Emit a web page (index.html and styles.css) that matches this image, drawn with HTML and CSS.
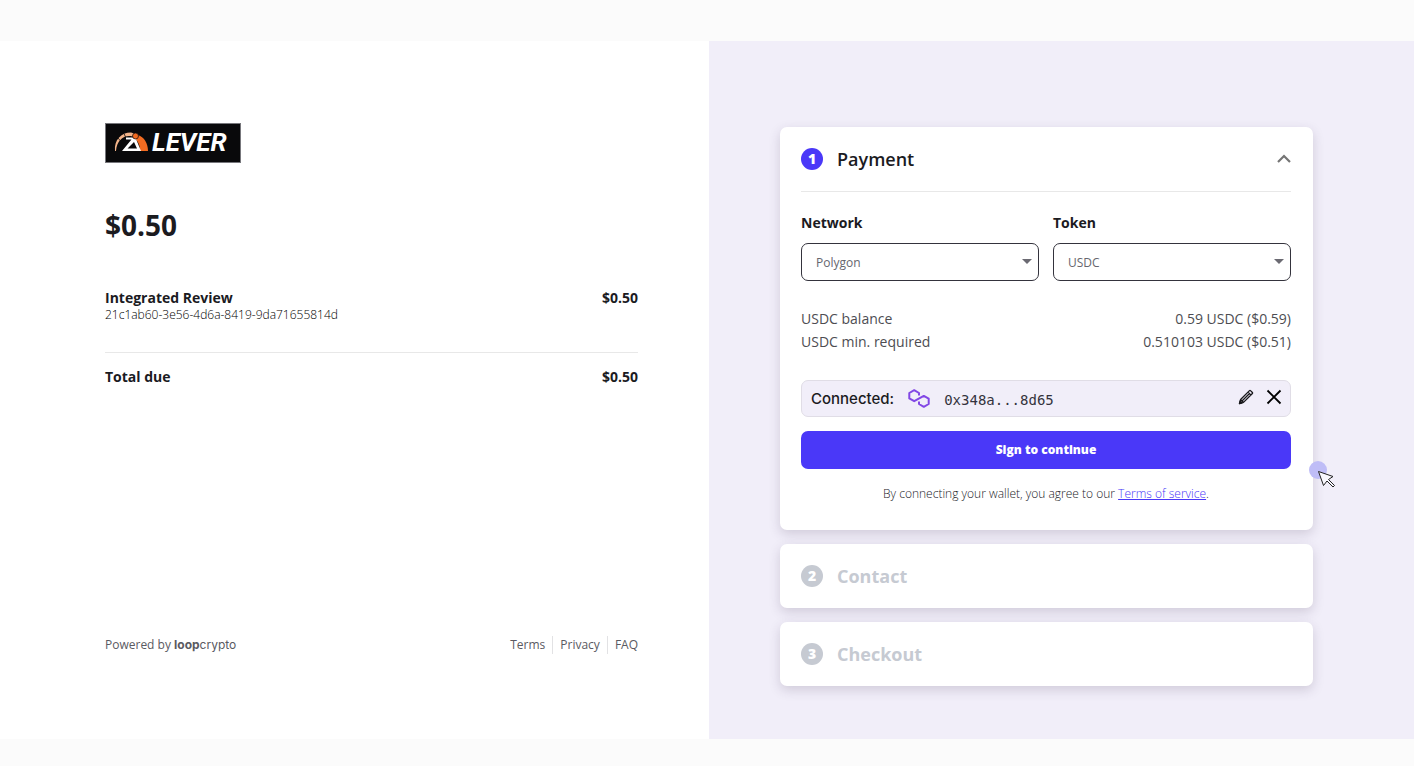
FILE: index.html
```html
<!DOCTYPE html>
<html lang="en">
<head>
<meta charset="utf-8">
<meta name="viewport" content="width=device-width, initial-scale=1">
<title>Payment</title>
<link rel="stylesheet" href="styles.css">
</head>
<body>
<main class="checkout">
  <section class="summary">
    <div class="summary-inner">
      <svg class="logo" viewBox="0 0 136 40" role="img" aria-label="Lever">
        <rect x="0.5" y="0.5" width="135" height="39" fill="#09090b" stroke="#77777c"/>
        <path d="M10 28C9 17 16 9.500 26 9.500L29 10.500L27.500 13.500C19 11.500 12 17 11 28Z" fill="#f3b48a"/>
        <path d="M13 15L15.500 18M19 10.500L20.500 14" stroke="#09090b" stroke-width="0.800"/>
        <path d="M33 12C39 14 43 20 43 28H35C35 22 33 18 29 15Z" fill="#f26b21"/>
        <path fill-rule="evenodd" d="M21 14.500H28L31 16L36 28H17L26.500 16.500H21ZM22.500 25.500H32L29 19Z" fill="#fff"/>
        <circle cx="30.500" cy="13" r="3" fill="#f26b21" stroke="#09090b" stroke-width="0.700"/>
        <text class="logo-text" x="47" y="28">LEVER</text>
      </svg>
      <h1 class="amount">$0.50</h1>
      <div class="line strong"><span>Integrated Review</span><span>$0.50</span></div>
      <p class="item-id">21c1ab60-3e56-4d6a-8419-9da71655814d</p>
      <div class="line strong total"><span>Total due</span><span>$0.50</span></div>
      <footer class="footer">
        <div>Powered by <span class="brand"><b>loop</b>crypto</span></div>
        <nav class="links"><a href="#">Terms</a><a href="#">Privacy</a><a href="#">FAQ</a></nav>
      </footer>
    </div>
  </section>
  <section class="steps">
    <div class="steps-inner">
      <article class="card active">
        <button class="step-head" type="button" aria-expanded="true">
          <span class="badge">1</span><span class="step-title">Payment</span>
          <svg class="chevron" viewBox="0 0 14 10"><path d="M1 8L7 2L13 8" fill="none" stroke="#757575" stroke-width="2.200"/></svg>
        </button>
        <div class="step-body">
          <div class="fields">
            <div class="field">
              <label for="network">Network</label>
              <div class="select-wrap"><select id="network"><option>Polygon</option></select></div>
            </div>
            <div class="field">
              <label for="token">Token</label>
              <div class="select-wrap"><select id="token"><option>USDC</option></select></div>
            </div>
          </div>
          <div class="balances">
            <div class="line"><span>USDC balance</span><span>0.59 USDC ($0.59)</span></div>
            <div class="line"><span>USDC min. required</span><span>0.510103 USDC ($0.51)</span></div>
          </div>
          <div class="wallet">
            <span class="wallet-label">Connected:</span>
            <svg class="polygon" viewBox="0 0 22 20" fill="none" stroke="#8247e5" stroke-width="2" stroke-linejoin="round">
              <path d="M11 6.500V4L6.200 1.200L1.300 4V9.400L6.200 12.200L15.800 6.900L20.700 9.700V15L15.800 17.800L11 15V12.500"/>
            </svg>
            <span class="address">0x348a...8d65</span>
            <span class="actions">
              <button class="icon-button" type="button" aria-label="Edit wallet">
                <svg class="icon" viewBox="0 0 16 16" fill="none" stroke="#18181b" stroke-width="1.300" stroke-linejoin="round"><path d="M1.500 14.500L2.600 10.500L11.500 1.600Q12 1.100 12.500 1.600L14.400 3.500Q14.900 4 14.400 4.500L5.500 13.400ZM2.600 10.500L5.500 13.400M10 3.100L12.900 6M4 12L11.500 4.500"/><path d="M1.500 14.500L2.200 12L4 13.800Z" fill="#18181b"/></svg>
              </button>
              <button class="icon-button" type="button" aria-label="Disconnect wallet">
                <svg class="icon" viewBox="0 0 16 16"><path d="M1.500 1.500L14.500 14.500M14.500 1.500L1.500 14.500" stroke="#000" stroke-width="1.800"/></svg>
              </button>
            </span>
          </div>
          <button class="submit" type="button">Sign to continue</button>
          <p class="terms">By connecting your wallet, you agree to our <a href="#">Terms of service</a>.</p>
        </div>
        <svg class="pointer" viewBox="0 0 28 28"><circle cx="9" cy="9" r="9" fill="#bfbdf7"/><path d="M9.500 10.500L24 15.500L19.500 18.500L25.500 24.500L24 26L18 20L14.500 24.500Z" fill="#f8f7fe" stroke="#222" stroke-width="1" stroke-linejoin="round"/></svg>
      </article>
      <article class="card"><button class="step-head" type="button" disabled><span class="badge">2</span><span class="step-title">Contact</span></button></article>
      <article class="card"><button class="step-head" type="button" disabled><span class="badge">3</span><span class="step-title">Checkout</span></button></article>
    </div>
  </section>
</main>
</body>
</html>
```

FILE: styles.css
```css
* { box-sizing: border-box; }
body {
  margin: 0;
  padding: 41px 0 27px;
  min-height: 100vh;
  display: flex;
  background: #fbfbfb;
  color: #1b1b1f;
  font: 14px/18px "Open Sans", sans-serif;
}
h1, p { margin: 0; }
button { font: inherit; border: 0; background: none; padding: 0; cursor: pointer; }
.checkout { flex: 1; display: grid; grid-template-columns: 709fr 705fr; }
.summary { background: #fff; padding: 82px 71px 85px 24px; display: flex; justify-content: flex-end; }
.summary-inner { flex: 1; max-width: 533px; display: flex; flex-direction: column; }
.logo { width: 136px; height: 40px; }
.logo-text { font: italic 700 26px Roboto, sans-serif; fill: #fff; }
.amount { margin: 42px 0 44px; font-size: 28px; line-height: 40px; font-weight: 700; }
.line { display: flex; justify-content: space-between; }
.strong { font-weight: 700; }
.item-id { font-size: 12px; line-height: 16px; font-weight: 300; color: #000; }
.total { margin-top: 29px; padding-top: 15px; border-top: 1px solid #e8e8e8; }
.footer { margin-top: auto; display: flex; justify-content: space-between; font-size: 12px; color: #5a5a62; }
.brand { font-family: Inter, sans-serif; }
.links { display: flex; }
.links a { color: inherit; text-decoration: none; padding: 0 7px; border-right: 1px solid #e2e2e4; }
.links a:last-child { padding-right: 0; border: 0; }

.steps { background: #f1eef9; padding: 86px 24px 52px 71px; }
.steps-inner { max-width: 533px; display: flex; flex-direction: column; gap: 14px; }
.card { position: relative; background: #fff; border-radius: 7px; padding: 0 22px 0 21px; box-shadow: 0 4px 12px rgba(60, 45, 80, 0.18); }
.step-head { width: 100%; height: 64px; display: flex; align-items: center; gap: 14px; text-align: left; color: #c6cad2; font-size: 18px; font-weight: 700; }
.badge { width: 22px; height: 22px; border-radius: 50%; background: #c6cad2; color: #fff; font-size: 14px; line-height: 22px; text-align: center; font-weight: 800; }
.active .step-head { height: 65px; border-bottom: 1px solid #e8e8e8; color: #1b1b1f; font-weight: 600; }
.active .badge { background: #4a38f8; }
.chevron { width: 14px; height: 10px; margin-left: auto; }
.step-body { padding: 22px 0 27px; }
.fields { display: grid; grid-template-columns: 1fr 1fr; gap: 14px; }
.field label { display: block; margin-bottom: 11px; font-weight: 700; }
.select-wrap { position: relative; }
.select-wrap::after { content: ""; position: absolute; right: 7px; top: 16px; border: 5px solid transparent; border-top-color: #6b6a72; border-bottom: 0; pointer-events: none; }
select { appearance: none; width: 100%; height: 38px; padding: 0 14px; border: 1px solid #34333d; border-radius: 7px; background: #fff; color: #66666e; font: 12px "Open Sans", sans-serif; }
.balances { margin: 26px 0 27px; color: #4d4d52; line-height: 23px; }
.wallet { height: 37px; padding: 0 8px 0 9px; display: flex; align-items: center; border: 1px solid #e0dde6; border-radius: 7px; background: #f1eef9; }
.wallet-label { font: 500 15px Inter, sans-serif; }
.polygon { width: 22px; height: 20px; margin: 0 14px; }
.address { flex: 1; padding-top: 2px; font: 14px "DejaVu Sans Mono", monospace; color: #34333d; }
.actions { display: flex; gap: 12px; padding-bottom: 4px; }
.icon-button { display: flex; }
.icon { width: 16px; height: 16px; }
.submit { width: 100%; height: 38px; margin: 14px 0 16px; border-radius: 7px; background: #4a38f8; color: #fff; font-size: 12px; font-weight: 800; }
.terms { font-size: 12px; text-align: center; color: #1b1b1f; font-weight: 300; }
.terms a { color: #4a38f8; }
.pointer { position: absolute; left: 529px; top: 334px; width: 28px; height: 28px; }
```
